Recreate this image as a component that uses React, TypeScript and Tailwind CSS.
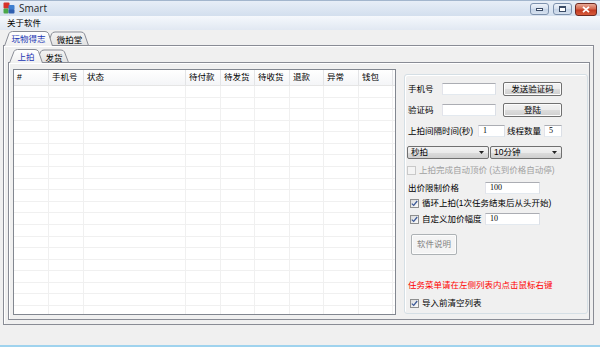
import React from "react";

function Check({ checked = false, disabled = false }: { checked?: boolean; disabled?: boolean }) {
  return (
    <span
      className={
        disabled
          ? "w-[9px] h-[9px] shrink-0 border border-[#c9c9c9] bg-[#f4f4f4] flex items-center justify-center"
          : "w-[9px] h-[9px] shrink-0 border border-[#8e8f8f] bg-[linear-gradient(135deg,#dcdcdc,#fbfbfb)] flex items-center justify-center"
      }
    >
      {checked && (
        <svg width="7" height="7" viewBox="0 0 7 7">
          <path d="M0.8 3.6 L2.7 5.4 L6.2 1" stroke="#3d5a98" strokeWidth="1.3" fill="none" />
        </svg>
      )}
    </span>
  );
}

function Btn({ w, children, disabled = false }: { w: string; children: React.ReactNode; disabled?: boolean }) {
  return (
    <div
      className={
        (disabled
          ? "border-[#adb2b5] bg-[#f4f4f4] text-[#838383] "
          : "border-[#707070] bg-[linear-gradient(#f2f2f2,#ebebeb_50%,#dddddd_50%,#cfcfcf)] ") +
        w +
        " border rounded-[2px] flex items-center justify-center shadow-[inset_0_0_0_1px_#fcfcfc]"
      }
    >
      {children}
    </div>
  );
}

function Input({ w, value = "" }: { w: string; value?: string }) {
  return (
    <div
      className={
        w +
        " h-[12px] bg-white border border-[#abadb3] border-l-[#e2e3ea] border-r-[#dbdfe6] border-b-[#e3e9ef] flex items-center pl-[4px] font-['Liberation_Serif',serif] text-[8px]"
      }
    >
      {value}
    </div>
  );
}

function Select({ w, value }: { w: string; value: string }) {
  return (
    <div
      className={
        w +
        " h-[13px] border border-[#707070] rounded-[2px] bg-[linear-gradient(#f2f2f2,#ebebeb_50%,#dddddd_50%,#cfcfcf)] flex items-center justify-between pl-[3px] pr-[4px]"
      }
    >
      <span>{value}</span>
      <svg width="5" height="3" viewBox="0 0 5 3">
        <path d="M0 0 L5 0 L2.5 3 Z" fill="#222" />
      </svg>
    </div>
  );
}

const cols = [
  { w: "w-[35px]", t: "#" },
  { w: "w-[35px]", t: "手机号" },
  { w: "w-[102px]", t: "状态" },
  { w: "w-[35px]", t: "待付款" },
  { w: "w-[34px]", t: "待发货" },
  { w: "w-[35px]", t: "待收货" },
  { w: "w-[34px]", t: "退款" },
  { w: "w-[35px]", t: "异常" },
  { w: "w-[34px]", t: "钱包" },
];

export default function App() {
  const rows = Array.from({ length: 20 });
  return (
    <div className="w-[600px] h-[347px] flex flex-col overflow-hidden bg-[#f0f0f0] text-black text-[8.5px] leading-none font-['Liberation_Sans','Noto_Sans_CJK_SC',sans-serif]">
      {/* Title bar */}
      <div className="h-[16px] shrink-0 flex items-start bg-[linear-gradient(#e7eef7,#d3dfee)] border-t border-[#a3b6cd]">
        <svg className="ml-[3px] mt-[1px]" width="12" height="12" viewBox="0 0 12 12">
          <rect x="0.5" y="0.5" width="6" height="6" rx="1" fill="#d8322a" />
          <rect x="5.5" y="3" width="6" height="5" rx="1" fill="#3e7fd0" />
          <rect x="0.5" y="6.5" width="5" height="5" rx="1" fill="#4aa84a" />
          <rect x="5.5" y="7.5" width="6" height="4" rx="1" fill="#2f5fb0" />
        </svg>
        <span className="ml-[4px] mt-[2px] text-[10px] font-['Open_Sans',sans-serif] text-[#1e1e1e]">Smart</span>
        <div className="ml-auto mr-[3px] mt-[2px] flex items-start">
          <div className="w-[19px] h-[12px] rounded-[3px] border border-[#7d91ad] bg-[linear-gradient(#eef3fa,#d4dfee_50%,#c3d2e6_50%,#d6e1ef)] flex items-center justify-center">
            <span className="w-[7px] h-[3px] bg-white border border-[#3b4c66]" />
          </div>
          <div className="ml-[4px] w-[19px] h-[12px] rounded-[3px] border border-[#7d91ad] bg-[linear-gradient(#eef3fa,#d4dfee_50%,#c3d2e6_50%,#d6e1ef)] flex items-center justify-center">
            <span className="w-[7px] h-[6px] bg-white border border-[#3b4c66] border-t-2" />
          </div>
          <div className="ml-[3px] w-[22px] h-[13px] rounded-[3px] border border-[#6e2a22] bg-[linear-gradient(#e9a996,#d4664d_45%,#c23a22_55%,#d75b3c)] flex items-center justify-center">
            <svg width="8" height="7" viewBox="0 0 8 7">
              <path d="M1 0.8 L7 6.2 M7 0.8 L1 6.2" stroke="#fff" strokeWidth="1.8" />
            </svg>
          </div>
        </div>
      </div>

      {/* Menu bar */}
      <div className="h-[14px] shrink-0 flex items-center pl-[7px] bg-[linear-gradient(#f5f8fc,#e1e8f2)]">关于软件</div>

      {/* Outer tab row */}
      <div className="h-[16px] shrink-0 flex items-end pl-[4px] relative z-10">
        <div className="relative z-20 w-[49px] h-[16px] flex justify-center pt-[5px] text-[#2236b4]">
          <svg className="absolute inset-0" width="49" height="16" viewBox="0 0 49 16">
            <defs>
              <linearGradient id="selg" x1="0" y1="0" x2="0" y2="1">
                <stop offset="0" stopColor="#ffffff" />
                <stop offset="1" stopColor="#f0f0f0" />
              </linearGradient>
            </defs>
            <path d="M0.5 16 L5 3.5 Q6 1.5 8.5 1.5 L41 1.5 Q43.5 1.5 44.5 3.5 L48.5 16" fill="url(#selg)" stroke="#898c95" />
          </svg>
          <span className="relative">玩物得志</span>
        </div>
        <div className="relative z-10 ml-[-6px] w-[42px] h-[16px] flex justify-center pt-[6px] pl-[3px]">
          <svg className="absolute inset-0" width="42" height="16" viewBox="0 0 42 16">
            <defs>
              <linearGradient id="ung" x1="0" y1="0" x2="0" y2="1">
                <stop offset="0" stopColor="#f4f4f4" />
                <stop offset="1" stopColor="#e2e2e2" />
              </linearGradient>
            </defs>
            <path d="M0.5 15.5 L4.5 4 Q5.5 2 8 2 L34 2 Q36.5 2 37.5 4 L41.5 15.5 Z" fill="url(#ung)" stroke="#898c95" />
          </svg>
          <span className="relative">微拍堂</span>
        </div>
      </div>

      {/* Outer panel */}
      <div className="mt-[-1px] ml-[3px] w-[591px] h-[280px] shrink-0 border border-[#898c95] bg-[#f0f0f0] shadow-[inset_1px_1px_0_#ffffff] flex flex-col">
        {/* Inner tab row */}
        <div className="h-[17px] shrink-0 flex items-end pl-[5px] relative z-10">
          <div className="relative z-20 w-[34px] h-[17px] flex justify-center pt-[7px] text-[#2236b4]">
            <svg className="absolute inset-0" width="34" height="17" viewBox="0 0 34 17">
              <path d="M0.5 17 L5 5.5 Q6 3.5 8.5 3.5 L26 3.5 Q28.5 3.5 29.5 5.5 L33.5 17" fill="url(#selg)" stroke="#898c95" />
            </svg>
            <span className="relative">上拍</span>
          </div>
          <div className="relative z-10 ml-[-7px] w-[33px] h-[17px] flex justify-center pt-[8px] pl-[3px]">
            <svg className="absolute inset-0" width="33" height="17" viewBox="0 0 33 17">
              <path d="M0.5 16.5 L4.5 6 Q5.5 4 8 4 L25 4 Q27.5 4 28.5 6 L32.5 16.5 Z" fill="url(#ung)" stroke="#898c95" />
            </svg>
            <span className="relative">发货</span>
          </div>
        </div>

        {/* Inner panel */}
        <div className="mt-[-1px] ml-[4px] w-[582px] h-[258px] shrink-0 border border-[#898c95] bg-[#f0f0f0] shadow-[inset_1px_1px_0_#ffffff] flex items-start">
          {/* List */}
          <div className="ml-[4px] mt-[6px] w-[383px] h-[246px] shrink-0 border border-[#828790] bg-white overflow-hidden flex flex-col">
            <div className="h-[16px] shrink-0 flex border-b border-[#e5e5e5] bg-[linear-gradient(#ffffff,#f4f5f7)]">
              {cols.map((c, i) => (
                <div key={i} className={c.w + " shrink-0 h-full border-r border-[#e3e4e6] flex items-center pl-[3px]"}>
                  {c.t}
                </div>
              ))}
            </div>
            {rows.map((_, r) => (
              <div key={r} className="h-[11.58px] shrink-0 flex border-b border-[#f0f0f0]">
                {cols.map((c, i) => (
                  <div key={i} className={c.w + " shrink-0 h-full border-r border-[#f0f0f0]"} />
                ))}
              </div>
            ))}
          </div>

          {/* Group box */}
          <div className="ml-[8px] mt-[11px] w-[184px] h-[240px] shrink-0 border border-[#d5dfe5] rounded-[3px] shadow-[inset_1px_1px_0_#ffffff] flex flex-col pl-[3px]">
            <div className="mt-[7px] h-[14px] flex items-center">
              <span className="w-[34px]">手机号</span>
              <Input w="w-[54px]" />
              <div className="ml-[7px]">
                <Btn w="w-[59px] h-[14px]">发送验证码</Btn>
              </div>
            </div>
            <div className="mt-[7px] h-[14px] flex items-center">
              <span className="w-[34px]">验证码</span>
              <Input w="w-[54px]" />
              <div className="ml-[7px]">
                <Btn w="w-[59px] h-[14px]">登陆</Btn>
              </div>
            </div>
            <div className="mt-[7px] h-[14px] flex items-center">
              <span className="w-[70px] whitespace-nowrap">上拍间隔时间(秒)</span>
              <Input w="w-[27px]" value="1" />
              <span className="ml-[2px] w-[37px]">线程数量</span>
              <Input w="w-[18px]" value="5" />
            </div>
            <div className="mt-[8px] h-[13px] flex items-center ml-[-1px]">
              <Select w="w-[82px]" value="秒拍" />
              <div className="ml-[1px]">
                <Select w="w-[72px]" value="10分钟" />
              </div>
            </div>
            <div className="mt-[5px] h-[12px] flex items-center ml-[-1px] text-[#a0a0a0]">
              <Check disabled />
              <span className="ml-[3px] whitespace-nowrap">上拍完成自动顶价 (达到价格自动停)</span>
            </div>
            <div className="mt-[5px] h-[14px] flex items-center">
              <span className="w-[77px]">出价限制价格</span>
              <Input w="w-[55px]" value="100" />
            </div>
            <div className="mt-[2px] h-[13px] flex items-center ml-[2px]">
              <Check checked />
              <span className="ml-[3px] whitespace-nowrap">循环上拍(1次任务结束后从头开始)</span>
            </div>
            <div className="mt-[2px] h-[14px] flex items-center">
              <div className="w-[77px] flex items-center pl-[2px]">
                <Check checked />
                <span className="ml-[3px] whitespace-nowrap">自定义加价幅度</span>
              </div>
              <Input w="w-[55px]" value="10" />
            </div>
            <div className="mt-[8px] ml-[3px]">
              <Btn w="w-[46px] h-[21px]" disabled>
                软件说明
              </Btn>
            </div>
            <div className="mt-[24px] h-[12px] flex items-center text-[#ff0000] whitespace-nowrap">
              任务菜单请在左侧列表内点击鼠标右键
            </div>
            <div className="mt-[6px] h-[13px] flex items-center ml-[2px]">
              <Check checked />
              <span className="ml-[3px]">导入前清空列表</span>
            </div>
          </div>
        </div>
      </div>

      <div className="flex-1" />
      <div className="h-[2px] shrink-0 bg-[#9fd3ee]" />
    </div>
  );
}
